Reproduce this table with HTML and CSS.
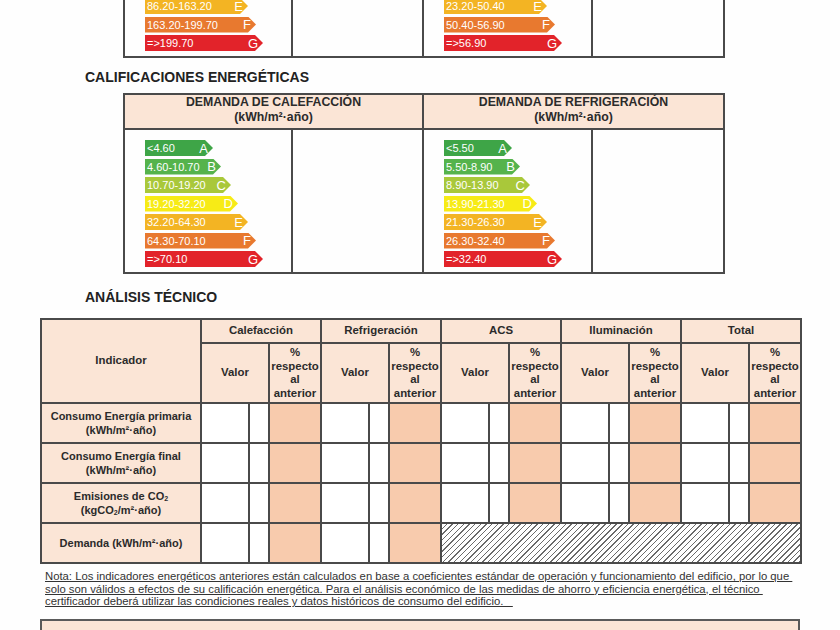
FILE: index.html
```html
<!DOCTYPE html>
<html lang="es">
<head>
<meta charset="utf-8">
<title>Calificaciones energéticas</title>
<link rel="stylesheet" href="styles.css">
</head>
<body>
<div class="page">
  <div class="prev">
    <table class="rating">
      <colgroup><col class="w1"><col class="w2"><col class="w3"><col class="w4"></colgroup>
      <tr>
        <td class="scale-cell">
          <div class="bar e"><span>86.20-163.20</span><b>E</b></div>
          <div class="bar f"><span>163.20-199.70</span><b>F</b></div>
          <div class="bar g"><span>=&gt;199.70</span><b>G</b></div>
        </td>
        <td></td>
        <td class="scale-cell">
          <div class="bar e"><span>23.20-50.40</span><b>E</b></div>
          <div class="bar f"><span>50.40-56.90</span><b>F</b></div>
          <div class="bar g"><span>=&gt;56.90</span><b>G</b></div>
        </td>
        <td></td>
      </tr>
    </table>
  </div>

  <h2 class="section">CALIFICACIONES ENERGÉTICAS</h2>
  <table class="rating">
    <colgroup><col class="w1"><col class="w2"><col class="w3"><col class="w4"></colgroup>
    <tr>
      <th colspan="2">DEMANDA DE CALEFACCIÓN<br>(kWh/m²·año)</th>
      <th colspan="2">DEMANDA DE REFRIGERACIÓN<br>(kWh/m²·año)</th>
    </tr>
    <tr>
      <td class="scale-cell">
        <div class="bar a"><span>&lt;4.60</span><b>A</b></div>
        <div class="bar b"><span>4.60-10.70</span><b>B</b></div>
        <div class="bar c"><span>10.70-19.20</span><b>C</b></div>
        <div class="bar d"><span>19.20-32.20</span><b>D</b></div>
        <div class="bar e"><span>32.20-64.30</span><b>E</b></div>
        <div class="bar f"><span>64.30-70.10</span><b>F</b></div>
        <div class="bar g"><span>=&gt;70.10</span><b>G</b></div>
      </td>
      <td></td>
      <td class="scale-cell">
        <div class="bar a"><span>&lt;5.50</span><b>A</b></div>
        <div class="bar b"><span>5.50-8.90</span><b>B</b></div>
        <div class="bar c"><span>8.90-13.90</span><b>C</b></div>
        <div class="bar d"><span>13.90-21.30</span><b>D</b></div>
        <div class="bar e"><span>21.30-26.30</span><b>E</b></div>
        <div class="bar f"><span>26.30-32.40</span><b>F</b></div>
        <div class="bar g"><span>=&gt;32.40</span><b>G</b></div>
      </td>
      <td></td>
    </tr>
  </table>

  <h2 class="section tech">ANÁLISIS TÉCNICO</h2>
  <table class="analysis">
    <colgroup>
      <col class="ind">
      <col class="v1"><col class="v2"><col class="pc">
      <col class="v1"><col class="v2"><col class="pc">
      <col class="v1"><col class="v2"><col class="pc">
      <col class="v1"><col class="v2"><col class="pc">
      <col class="v1"><col class="v2"><col class="pc">
    </colgroup>
    <tr class="h1">
      <th rowspan="2">Indicador</th>
      <th colspan="3">Calefacción</th>
      <th colspan="3">Refrigeración</th>
      <th colspan="3">ACS</th>
      <th colspan="3">Iluminación</th>
      <th colspan="3">Total</th>
    </tr>
    <tr class="h2">
      <th colspan="2">Valor</th><th>%<br>respecto<br>al<br>anterior</th>
      <th colspan="2">Valor</th><th>%<br>respecto<br>al<br>anterior</th>
      <th colspan="2">Valor</th><th>%<br>respecto<br>al<br>anterior</th>
      <th colspan="2">Valor</th><th>%<br>respecto<br>al<br>anterior</th>
      <th colspan="2">Valor</th><th>%<br>respecto<br>al<br>anterior</th>
    </tr>
    <tr class="data">
      <th>Consumo Energía primaria<br>(kWh/m²·año)</th>
      <td></td><td></td><td class="pct"></td>
      <td></td><td></td><td class="pct"></td>
      <td></td><td></td><td class="pct"></td>
      <td></td><td></td><td class="pct"></td>
      <td></td><td></td><td class="pct"></td>
    </tr>
    <tr class="data">
      <th>Consumo Energía final<br>(kWh/m²·año)</th>
      <td></td><td></td><td class="pct"></td>
      <td></td><td></td><td class="pct"></td>
      <td></td><td></td><td class="pct"></td>
      <td></td><td></td><td class="pct"></td>
      <td></td><td></td><td class="pct"></td>
    </tr>
    <tr class="data">
      <th>Emisiones de CO<sub>2</sub><br>(kgCO<sub>2</sub>/m²·año)</th>
      <td></td><td></td><td class="pct"></td>
      <td></td><td></td><td class="pct"></td>
      <td></td><td></td><td class="pct"></td>
      <td></td><td></td><td class="pct"></td>
      <td></td><td></td><td class="pct"></td>
    </tr>
    <tr class="data last">
      <th>Demanda (kWh/m²·año)</th>
      <td></td><td></td><td class="pct"></td>
      <td></td><td></td><td class="pct"></td>
      <td colspan="9" class="hatch"></td>
    </tr>
  </table>

  <p class="note">Nota: Los indicadores energéticos anteriores están calculados en base a coeficientes estándar de operación y funcionamiento del edificio, por lo que&nbsp;<br>solo son válidos a efectos de su calificación energética. Para el análisis económico de las medidas de ahorro y eficiencia energética, el técnico&nbsp;<br>certificador deberá utilizar las condiciones reales y datos históricos de consumo del edificio.&nbsp;&nbsp;&nbsp;</p>

  <div class="box"></div>
</div>
</body>
</html>
```

FILE: styles.css
```css
html, body {
  margin: 0;
  padding: 0;
  background: #fefefe;
}

body {
  font-family: "Liberation Sans", Arial, sans-serif;
  color: #2b2b2b;
  width: 840px;
  height: 630px;
  overflow: hidden;
}

.page {
  display: flex;
  flex-direction: column;
  align-items: flex-start;
}

/* clipped continuation of the previous table */
.prev {
  height: 58px;
  overflow: hidden;
  display: flex;
  flex-direction: column;
  justify-content: flex-end;
  align-self: stretch;
}

.rating {
  margin-left: 123px;
  width: 600px;
  table-layout: fixed;
  border-collapse: collapse;
  border: 2px solid #4a4a4a;
}

.rating col.w1 { width: 168px; }
.rating col.w2 { width: 131px; }
.rating col.w3 { width: 169px; }
.rating col.w4 { width: 132px; }

.rating td,
.rating th {
  border: 2px solid #4a4a4a;
  padding: 0;
}

.rating th {
  background: #fbe5d6;
  font-size: 12.3px;
  line-height: 15px;
  font-weight: bold;
  height: 30px;
  padding-bottom: 3px;
  color: #2b2b2b;
}

.rating td.scale-cell {
  vertical-align: top;
  padding: 10px 0 5px 20px;
}

.bar {
  height: 16px;
  display: flex;
  align-items: center;
  justify-content: space-between;
  padding: 0 5px 0 2px;
  box-sizing: border-box;
  color: #fff;
  font-size: 11px;
  clip-path: polygon(0 0, calc(100% - 8px) 0, 100% 50%, calc(100% - 8px) 100%, 0 100%);
}

.bar + .bar { margin-top: 2.5px; }

.bar b {
  font-weight: normal;
  font-size: 13px;
}

.bar.a { width: 68px;  background: #3ea547; }
.bar.b { width: 76px;  background: #55b34c; }
.bar.c { width: 86px;  background: #a9c83a; }
.bar.d { width: 93px;  background: #f7eb16; }
.bar.e { width: 103px; background: #f3b423; }
.bar.f { width: 111px; background: #e8792f; }
.bar.g { width: 118px; background: #e2232a; }

.section {
  margin: 11px 0 8px 85px;
  font-size: 14px;
  line-height: 16px;
  font-weight: bold;
  color: #222;
}

.section.tech {
  margin: 15px 0 13px 85px;
}

/* technical analysis table */
.analysis {
  margin-left: 40px;
  width: 760px;
  table-layout: fixed;
  border-collapse: collapse;
  border: 2px solid #4a4a4a;
}

.analysis col.ind { width: 160px; }
.analysis col.v1 { width: 48px; }
.analysis col.v2 { width: 20px; }
.analysis col.pc { width: 52px; }

.analysis th,
.analysis td {
  border: 2px solid #4a4a4a;
  padding: 0;
}

.analysis th {
  background: #fbe5d6;
  font-size: 11.4px;
  line-height: 13.5px;
  font-weight: bold;
  color: #2b2b2b;
  text-align: center;
}

.analysis tr.h1 th { height: 22px; }
.analysis tr.h2 th { height: 58px; }

.analysis tr.data th {
  height: 38px;
  font-size: 11px;
  line-height: 14px;
}

.analysis sub {
  font-size: 7px;
  line-height: 0;
  vertical-align: -1px;
}

.analysis td {
  background: #ffffff;
}

.analysis td.pct {
  background: #f8cbad;
}

.analysis td.hatch {
  background: repeating-linear-gradient(135deg, #ffffff 0 3px, #6a6a6a 3px 4px);
}

.note {
  margin: 6px 0 0 45px;
  font-size: 11.3px;
  line-height: 12.5px;
  color: #333;
  text-decoration: underline;
  white-space: nowrap;
}

.box {
  margin: 11px 0 0 40px;
  width: 756px;
  height: 9px;
  background: #fbe5d6;
  border: 2px solid #5a5a5a;
  border-bottom: none;
}
```
